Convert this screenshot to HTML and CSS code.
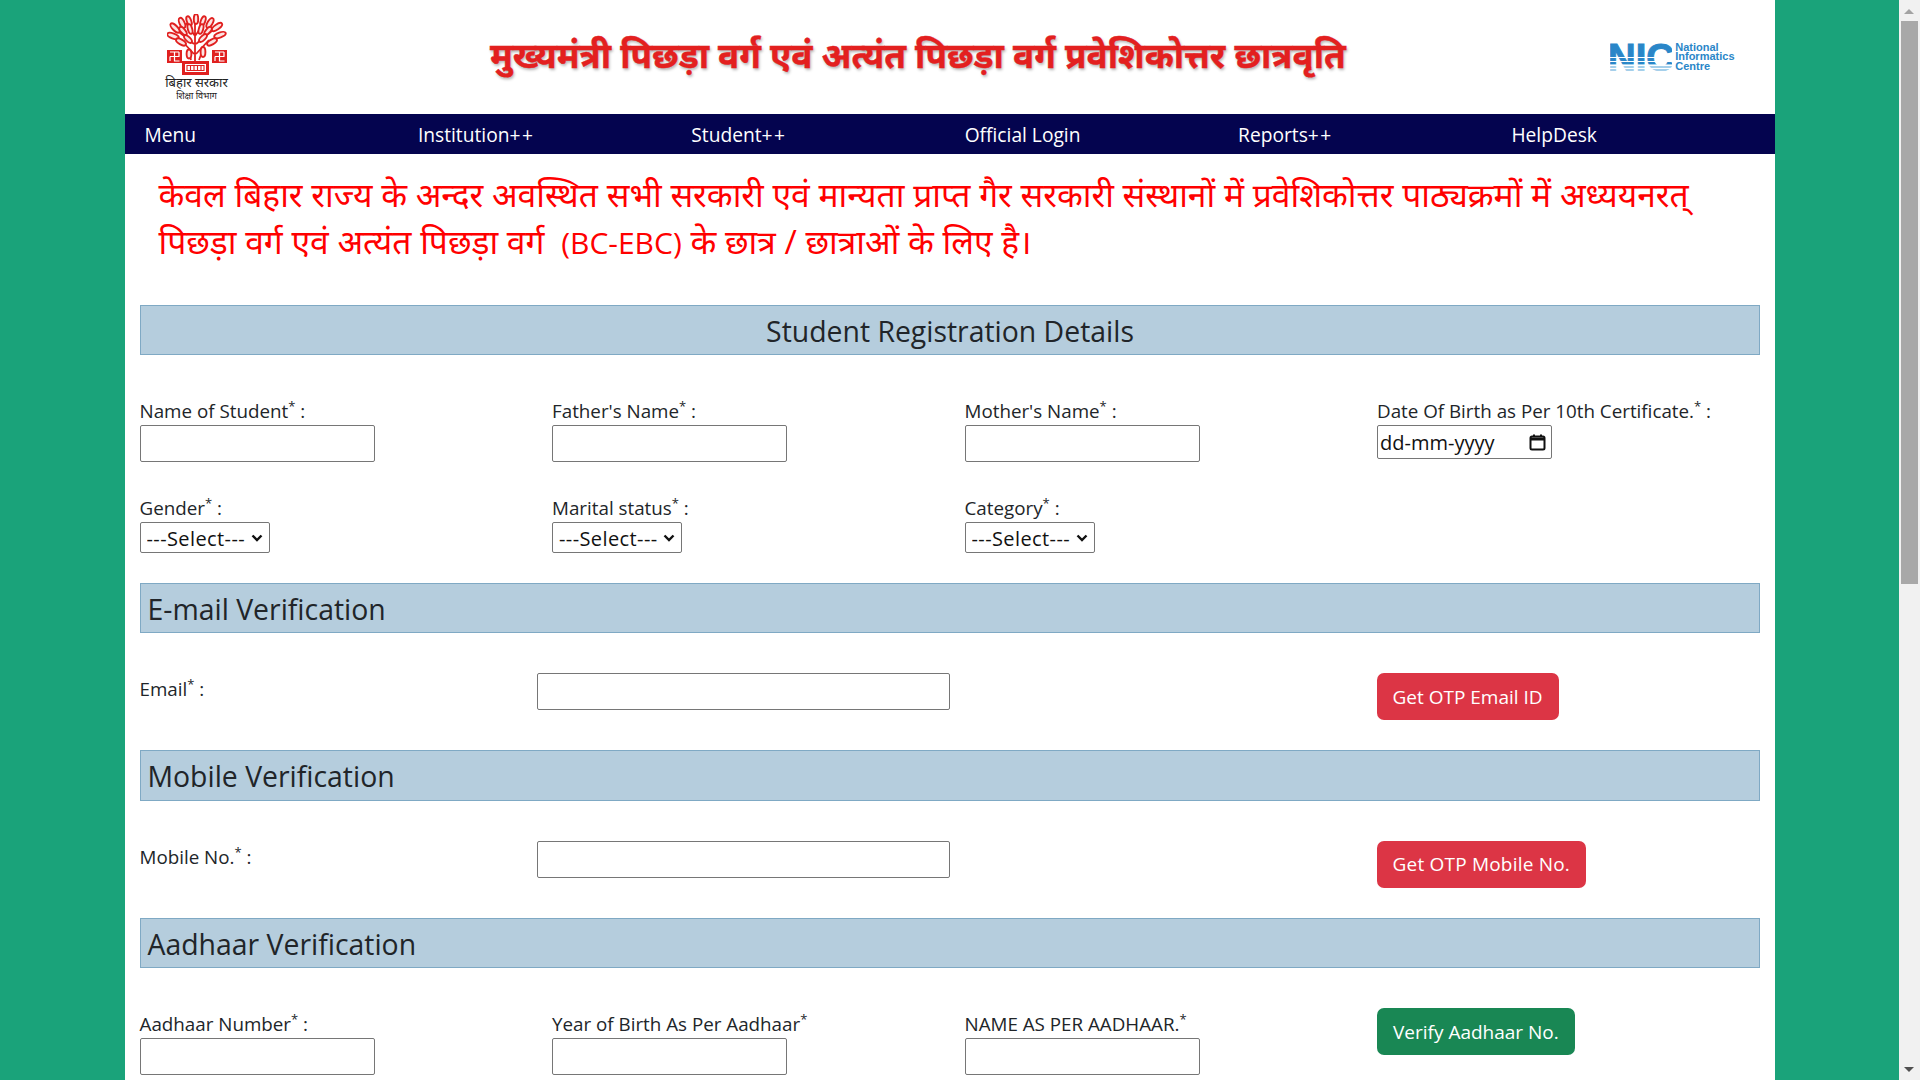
FILE: index.html
```html
<!DOCTYPE html>
<html lang="hi">
<head>
    <meta charset="UTF-8">
    <title>Student Registration</title>
    <meta name="viewport" content="width=device-width, initial-scale=1">
    <link rel="stylesheet" href="styles.css">
</head>
<body>
  <div class="page">
    <div class="wrap">
      <header class="top">
        <div class="emblem">
          <svg width="60" height="61" viewBox="0 0 60 61" fill="none" stroke="#e0201f">
            <!-- tree -->
            <path d="M28 47V8M27 40L15 27M29 40L42 26M27 30L12 18M29 30L46 16M28 22L19 9M28 22L38 8M24 46L22 38M32 46L35 38" stroke-width="1.8"/>
            <g stroke-width="1.9" fill="#fbe3e2">
              <ellipse cx="29" cy="5" rx="2.2" ry="5"/>
              <ellipse cx="22" cy="7" rx="2.2" ry="5" transform="rotate(-20 22 7)"/>
              <ellipse cx="36" cy="7" rx="2.2" ry="5" transform="rotate(20 36 7)"/>
              <ellipse cx="15" cy="9" rx="2.5" ry="5.5" transform="rotate(-25 15 9)"/>
              <ellipse cx="43" cy="9" rx="2.5" ry="5.5" transform="rotate(30 43 9)"/>
              <ellipse cx="8" cy="14" rx="2.5" ry="6" transform="rotate(-45 8 14)"/>
              <ellipse cx="50" cy="13" rx="2.5" ry="6" transform="rotate(55 50 13)"/>
              <ellipse cx="6" cy="22" rx="2.5" ry="6" transform="rotate(-70 6 22)"/>
              <ellipse cx="53" cy="21" rx="2.5" ry="6" transform="rotate(70 53 21)"/>
              <ellipse cx="14" cy="28" rx="2.5" ry="5.5" transform="rotate(-60 14 28)"/>
              <ellipse cx="45" cy="28" rx="2.5" ry="5.5" transform="rotate(60 45 28)"/>
              <ellipse cx="16" cy="17" rx="2.3" ry="5" transform="rotate(-40 16 17)"/>
              <ellipse cx="41" cy="17" rx="2.3" ry="5" transform="rotate(40 41 17)"/>
              <ellipse cx="23" cy="15" rx="2.2" ry="5" transform="rotate(-15 23 15)"/>
              <ellipse cx="34" cy="15" rx="2.2" ry="5" transform="rotate(15 34 15)"/>
              <ellipse cx="21" cy="25" rx="2.2" ry="5" transform="rotate(-45 21 25)"/>
              <ellipse cx="36" cy="24" rx="2.2" ry="5" transform="rotate(45 36 24)"/>
              <ellipse cx="22" cy="40" rx="2.4" ry="4.5"/>
              <ellipse cx="36" cy="38" rx="2.4" ry="5"/>
            </g>
            <!-- side marks -->
            <rect x="0" y="36" width="15" height="13" fill="#e0201f" stroke="none"/>
            <rect x="45" y="36" width="15" height="13" fill="#e0201f" stroke="none"/>
            <path d="M3 38h4.500v9h5M12 38h-4.500M3 42.500h9.500M12 38v4.500M3 42.500v4.500" stroke="#fff" stroke-width="1.200"/>
            <path d="M48 38h4.500v9h5M57 38h-4.500M48 42.500h9.500M57 38v4.500M48 42.500v4.500" stroke="#fff" stroke-width="1.200"/>
            <!-- base -->
            <rect x="15" y="47" width="27" height="14" fill="#e0201f" stroke="none"/>
            <rect x="18" y="50" width="21" height="8" fill="#fff" stroke="none"/>
            <path d="M20 51.500h17v5h-17zM23.500 52v4M27 52v4M30.500 52v4M34 52v4" stroke-width="1.100"/>
          </svg>
          <div class="emblem-state">बिहार सरकार</div>
          <div class="emblem-dept">शिक्षा विभाग</div>
        </div>
        <h1 class="title">मुख्यमंत्री पिछड़ा वर्ग एवं अत्यंत पिछड़ा वर्ग प्रवेशिकोत्तर छात्रवृति</h1>
        <div class="nic">
          <svg width="62" height="28" viewBox="0 0 62 28">
            <defs>
              <linearGradient id="nicfill" x1="0" y1="0" x2="0" y2="28" gradientUnits="userSpaceOnUse">
                <stop offset="0.75" stop-color="#2a86c8"/>
                <stop offset="0.75" stop-color="#a5cfea"/>
              </linearGradient>
            </defs>
            <text x="-2" y="28" font-family="Liberation Sans" font-weight="700" font-size="39" textLength="66" lengthAdjust="spacingAndGlyphs" fill="url(#nicfill)" stroke="url(#nicfill)" stroke-width="1">NIC</text>
            <path d="M0 14.500h62M0 18.500h62M0 22.500h62M0 25.500h62" stroke="#fff" stroke-width="1"/>
          </svg>
          <div class="nic-name">National<br>Informatics<br>Centre</div>
        </div>
      </header>

      <nav class="menu">
        <a>Menu</a>
        <a>Institution<span class="plus">++</span></a>
        <a>Student<span class="plus">++</span></a>
        <a>Official Login</a>
        <a>Reports<span class="plus">++</span></a>
        <a>HelpDesk</a>
      </nav>

      <main class="content">
        <p class="notice">केवल बिहार राज्य के अन्दर अवस्थित सभी सरकारी एवं मान्यता प्राप्त गैर सरकारी संस्थानों में प्रवेशिकोत्तर पाठ्यक्रमों में अध्ययनरत् पिछड़ा वर्ग एवं अत्यंत पिछड़ा वर्ग <span class="latin">(BC-EBC)</span> के छात्र / छात्राओं के लिए है।</p>

        <h2 class="bar bar-center">Student Registration Details</h2>
        <div class="cols first-row">
          <div class="field"><label>Name of Student<sup>*</sup> :</label><input type="text" class="box"></div>
          <div class="field"><label>Father's Name<sup>*</sup> :</label><input type="text" class="box"></div>
          <div class="field"><label>Mother's Name<sup>*</sup> :</label><input type="text" class="box"></div>
          <div class="field"><label>Date Of Birth as Per 10th Certificate.<sup>*</sup> :</label>
            <div class="datebox">dd-mm-yyyy
              <svg width="17" height="17" viewBox="0 0 17 17" fill="none" stroke="#111">
                <rect x="1.500" y="2.500" width="14" height="13" rx="1.500" stroke-width="2"/>
                <path d="M1.500 5h14" stroke-width="3"/>
                <path d="M5 0.500v2M12 0.500v2" stroke-width="2"/>
              </svg>
            </div>
          </div>
        </div>
        <div class="cols second-row">
          <div class="field"><label>Gender<sup>*</sup> :</label><select class="pick"><option>---Select---</option></select></div>
          <div class="field"><label>Marital status<sup>*</sup> :</label><select class="pick"><option>---Select---</option></select></div>
          <div class="field"><label>Category<sup>*</sup> :</label><select class="pick"><option>---Select---</option></select></div>
        </div>

        <h2 class="bar">E-mail Verification</h2>
        <div class="verify">
          <label>Email<sup>*</sup> :</label>
          <input type="text" class="box wide">
          <button class="btn btn-red">Get OTP Email ID</button>
        </div>

        <h2 class="bar">Mobile Verification</h2>
        <div class="verify">
          <label>Mobile No.<sup>*</sup> :</label>
          <input type="text" class="box wide">
          <button class="btn btn-red btn-mobile">Get OTP Mobile No.</button>
        </div>

        <h2 class="bar">Aadhaar Verification</h2>
        <div class="cols aadhaar-row">
          <div class="field"><label>Aadhaar Number<sup>*</sup> :</label><input type="text" class="box"></div>
          <div class="field"><label>Year of Birth As Per Aadhaar<sup>*</sup></label><input type="text" class="box"></div>
          <div class="field"><label>NAME AS PER AADHAAR.<sup>*</sup></label><input type="text" class="box"></div>
          <div class="field"><button class="btn btn-green">Verify Aadhaar No.</button></div>
        </div>
      </main>
    </div>
  </div>
  <div class="scrollbar">
    <span class="arrow-up"></span>
    <div class="thumb"></div>
    <span class="arrow-down"></span>
  </div>
</body>
</html>
```

FILE: styles.css
```css
html, body {
  height: 100%;
  margin: 0;
  overflow: hidden;
}
body {
  display: flex;
  font-family: "Open Sans", "Noto Sans", sans-serif;
  font-size: 18.800px;
  color: #212529;
}
.page {
  flex: 1;
  background: #1aa37a;
  overflow: hidden;
}
.wrap {
  width: 1650px;
  height: 100%;
  margin: 0 auto;
  background: #fff;
}

/* header */
.top {
  display: flex;
  align-items: center;
  height: 114px;
}
.emblem {
  width: 60px;
  margin-left: 42px;
  padding-top: 14px;
  align-self: flex-start;
  text-align: center;
  white-space: nowrap;
  line-height: 1;
  color: #222;
}
.emblem svg { display: block; }
.emblem-state { font-size: 13px; margin: 1px -3px 0 -3px; }
.emblem-dept { font-size: 9px; margin: 2px -3px 0 -3px; }
.title {
  flex: 1;
  margin: 0 1px 7px 0;
  text-align: center;
  font-size: 35.100px;
  font-weight: bold;
  color: #e3201f;
  -webkit-text-stroke: 0.4px #e3201f;
  text-shadow: 1px 2px 3px rgba(0,0,0,0.3);
  white-space: nowrap;
}
.nic {
  display: flex;
  gap: 3px;
  margin-right: 40px;
  color: #2a86c8;
}
.nic svg { display: block; }
.nic-name {
  font-family: "Liberation Sans", sans-serif;
  font-size: 11px;
  line-height: 9.500px;
  font-weight: bold;
}

/* nav */
.menu {
  display: grid;
  grid-template-columns: repeat(6, 273.4px);
  height: 40px;
  padding-left: 20px;
  background: #04044f;
  color: #fff;
  font-size: 19.200px;
  line-height: 41px;
}
.plus { letter-spacing: 1.500px; }

/* body */
.content { padding: 0 15px; }
.notice {
  margin: 0;
  height: 151px;
  padding: 17px 18px 0 19px;
  color: #f00;
  font-size: 33.600px;
  line-height: 47px;
  box-sizing: border-box;
}
.latin { font-size: 30px; margin-left: 8px; }
.bar {
  margin: 0;
  height: 50.400px;
  padding-left: 7px;
  box-sizing: border-box;
  background: #b5cddd;
  border: 1px solid #7fa9c4;
  font-size: 28.400px;
  font-weight: normal;
  line-height: 50px;
  white-space: nowrap;
}
.bar-center { text-align: center; padding-left: 1px; }

.cols {
  display: grid;
  grid-template-columns: repeat(4, 412.5px);
}
.first-row { padding-top: 43px; height: 120px; box-sizing: border-box; }
.second-row { padding-top: 20px; height: 107.600px; box-sizing: border-box; }
.aadhaar-row { padding-top: 43px; }
.field label {
  display: block;
  height: 27px;
  line-height: 26px;
  white-space: nowrap;
}
label sup {
  font-size: 13px;
  line-height: 0;
}
.box {
  display: block;
  width: 235px;
  height: 37px;
  padding: 0 4px;
  box-sizing: border-box;
  border: 1px solid #767676;
  border-radius: 2px;
  background: #fff;
}
.box.wide { width: 413px; }
.datebox {
  display: flex;
  align-items: center;
  justify-content: space-between;
  width: 175px;
  height: 34px;
  padding: 0 5px 0 2px;
  box-sizing: border-box;
  border: 1px solid #767676;
  border-radius: 2px;
  font-size: 20px;
  color: #111;
}
.pick {
  display: block;
  width: 130px;
  height: 31px;
  padding: 1px 0 0 6px;
  border: 1px solid #767676;
  border-radius: 2px;
  appearance: none;
  background: #fff url("data:image/svg+xml,%3Csvg xmlns='http://www.w3.org/2000/svg' width='12' height='8'%3E%3Cpath d='M1.500 1.500L6 6l4.500-4.500' fill='none' stroke='%23111' stroke-width='2.400'/%3E%3C/svg%3E") no-repeat right 6px center;
  font-family: inherit;
  font-size: 20px;
  letter-spacing: 0.400px;
  color: #111;
}
.verify {
  display: grid;
  grid-template-columns: 397px 840px auto;
  align-items: start;
  height: 117px;
  padding-top: 40px;
  box-sizing: border-box;
}
.verify label { line-height: 33px; white-space: nowrap; }
.btn {
  height: 47px;
  padding: 0 16px;
  border: none;
  border-radius: 7px;
  color: #fff;
  font-family: inherit;
  font-size: 19px;
  white-space: nowrap;
  justify-self: start;
}
.btn-red { background: #dc3545; }
.btn-mobile { letter-spacing: 0.200px; }
.btn-green { background: #198754; margin-top: -3px; }

/* scrollbar */
.scrollbar {
  position: relative;
  flex: 0 0 21px;
  background: #f1f1f1;
}
.thumb {
  position: absolute;
  top: 21px;
  left: 2px;
  width: 17px;
  height: 563px;
  background: #a8a8a8;
}
.arrow-up, .arrow-down {
  position: absolute;
  left: 5px;
  width: 0;
  height: 0;
  border-left: 5px solid transparent;
  border-right: 5px solid transparent;
}
.arrow-up { top: 9px; border-bottom: 5px solid #a3a3a3; }
.arrow-down { bottom: 8px; border-top: 5px solid #505050; }
```
